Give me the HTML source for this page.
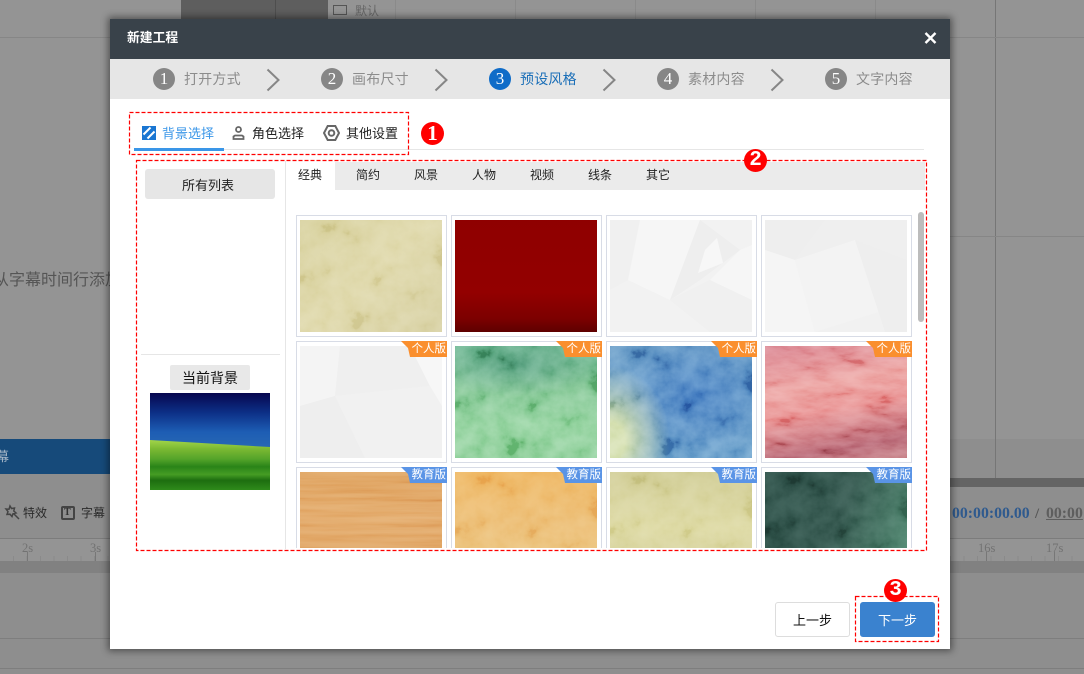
<!DOCTYPE html>
<html lang="zh"><head><meta charset="utf-8"><title>新建工程</title>
<style>
*{box-sizing:border-box}
html,body{margin:0;padding:0}
body{width:1084px;height:674px;overflow:hidden;position:relative;background:#8e8e8e;font-family:"Liberation Sans","Noto Sans CJK SC",sans-serif;color:#222}
.a{position:absolute}
.t{position:absolute;white-space:nowrap;line-height:1}
.vl{position:absolute;top:0;width:1px;height:439px;background:#8a8a8a}
.m{position:absolute;left:110px;top:19px;width:840px;height:630px;background:#fff;box-shadow:0 0 7px 2px rgba(0,0,0,.45)}
.num{position:absolute;top:68px;width:22px;height:22px;border-radius:50%;background:#868686;color:#fff;font:17px/22px "Liberation Serif",serif;text-align:center}
.st{position:absolute;top:72px;font-size:14px;line-height:14px;letter-spacing:.2px;color:#8c8c8c;white-space:nowrap}
.chev{position:absolute;top:68px;width:14px;height:24px}
.red{position:absolute;width:23px;height:23px;border-radius:50%;background:#f00;color:#fff;text-align:center;font:bold 21px/23px "Liberation Mono",monospace}
.tb{position:absolute;top:169px;font-size:12px;line-height:12px;color:#222;white-space:nowrap}
.card{position:absolute;width:151px;height:122px;border:1px solid #d8dce6;background:#fff}
.img{position:absolute;left:3px;top:4px;width:142px;height:112px;overflow:hidden}
.img svg{position:absolute;left:0;top:0;width:142px;height:112px;mix-blend-mode:soft-light;opacity:.6}
.img svg.f{mix-blend-mode:normal;opacity:1}
.img svg.s{opacity:.35}
.bd{position:absolute;right:-1px;top:-1px;width:46px;height:16px;color:#fff;font-size:11.500px;line-height:16px;text-align:right;padding-right:1px;clip-path:polygon(0 0,100% 0,100% 100%,9px 100%,7px 7px)}
.o{background:#fa8f2e}.b{background:#5a94e6}
.ruler{position:absolute;top:556px;height:5px;background:repeating-linear-gradient(90deg,#8a8a8a 0 1px,transparent 1px 13.500px)}
.rt{font:12.500px/12px "Liberation Serif",serif;color:#727272;top:542px}
</style></head><body>

<svg width="0" height="0" style="position:absolute">
<filter id="n2" x="0" y="0" width="100%" height="100%"><feTurbulence type="fractalNoise" baseFrequency=".045" numOctaves="5" seed="11"/><feColorMatrix values="1.800 0 0 0 -.4 1.800 0 0 0 -.4 1.800 0 0 0 -.4 0 0 0 0 1"/></filter>
<filter id="n3" x="0" y="0" width="100%" height="100%"><feTurbulence type="fractalNoise" baseFrequency=".03 .09" numOctaves="5" seed="21"/><feColorMatrix values="1.800 0 0 0 -.4 1.800 0 0 0 -.4 1.800 0 0 0 -.4 0 0 0 0 1"/></filter>
<filter id="n4" x="0" y="0" width="100%" height="100%"><feTurbulence type="fractalNoise" baseFrequency=".008 .16" numOctaves="4" seed="5"/><feColorMatrix values="1.800 0 0 0 -.4 1.800 0 0 0 -.4 1.800 0 0 0 -.4 0 0 0 0 1"/></filter>
</svg>

<!-- background application -->
<div class="a" style="left:0;top:0;width:1084px;height:439px;background:#949494"></div>
<div class="a" style="left:181px;top:0;width:147px;height:19px;background:#5e5e5e"></div>
<div class="a" style="left:275px;top:0;width:1px;height:19px;background:#4e4e4e"></div>
<div class="vl" style="left:395px"></div><div class="vl" style="left:515px"></div><div class="vl" style="left:635px"></div><div class="vl" style="left:755px"></div><div class="vl" style="left:875px"></div>
<div class="a" style="left:995px;top:0;width:1px;height:487px;background:#767676"></div>
<div class="a" style="left:0;top:37px;width:110px;height:1px;background:#868686"></div>
<div class="a" style="left:950px;top:37px;width:134px;height:1px;background:#868686"></div>
<div class="a" style="left:950px;top:236px;width:134px;height:1px;background:#868686"></div>
<div class="a" style="left:333px;top:5px;width:14px;height:10px;border:1px solid #555"></div>
<div class="t" style="left:355px;top:5px;font-size:12px;color:#666">默认</div>
<div class="t" style="left:-7px;top:273px;font-size:16px;color:#555">从字幕时间行添加</div>
<div class="a" style="left:0;top:439px;width:110px;height:35px;background:#164a7a"></div>
<div class="t" style="left:-4px;top:450px;font-size:13px;color:#a8b8c8">幕</div>
<div class="a" style="left:950px;top:478px;width:134px;height:9px;background:#646464"></div>

<svg class="a" style="left:4px;top:504px" width="17" height="17" viewBox="0 0 17 17"><path d="M6 2l1.500 2.500 3-.5-.7 3 2.200 2-3 .7-1 2.800-2-2.300-3 .2 1-2.800L2 5l3 .2z M10 10l5 5" fill="none" stroke="#444" stroke-width="1.500"/></svg>
<div class="t" style="left:23px;top:507px;font-size:12px;color:#2b2b2b">特效</div>
<div class="a" style="left:61px;top:506px;width:14px;height:14px;border:2px solid #444;border-radius:2px"></div>
<div class="t" style="left:64px;top:508px;font:bold 10px/10px 'Liberation Serif',serif;color:#333">T</div>
<div class="t" style="left:81px;top:507px;font-size:12px;color:#2b2b2b">字幕</div>
<div class="t" style="left:952px;top:506px;font:bold 15.800px/16px 'Liberation Serif',serif;color:#2f5a8e">00:00:00.00</div>
<div class="t" style="left:1035px;top:506px;font:bold 15px/16px 'Liberation Serif',serif;color:#555">/</div>
<div class="t" style="left:1046px;top:506px;font:bold 15.800px/16px 'Liberation Serif',serif;color:#5e5e5e;text-decoration:underline">00:00</div>

<div class="a" style="left:0;top:539px;width:1084px;height:22px;background:#949494"></div>
<div class="a" style="left:0;top:538px;width:1084px;height:1px;background:#7c7c7c"></div>
<div class="t rt" style="left:22px">2s</div>
<div class="t rt" style="left:90px">3s</div>
<div class="t rt" style="left:978px">16s</div>
<div class="t rt" style="left:1046px">17s</div>
<div class="ruler" style="left:13px;width:97px"></div>
<div class="ruler" style="left:950px;width:134px"></div>
<div class="a" style="left:27px;top:552px;width:1px;height:9px;background:#777"></div>
<div class="a" style="left:95px;top:552px;width:1px;height:9px;background:#777"></div>
<div class="a" style="left:986px;top:552px;width:1px;height:9px;background:#777"></div>
<div class="a" style="left:1054px;top:552px;width:1px;height:9px;background:#777"></div>
<div class="a" style="left:0;top:561px;width:1084px;height:12px;background:#818181"></div>
<div class="a" style="left:0;top:638px;width:1084px;height:1px;background:#7e7e7e"></div>
<div class="a" style="left:0;top:668px;width:1084px;height:1px;background:#7e7e7e"></div>

<!-- modal -->
<div class="m"></div>
<div class="a" style="left:110px;top:19px;width:840px;height:40px;background:#39424a"></div>
<div class="t" style="left:127px;top:32px;font-size:12.800px;font-weight:bold;color:#fff">新建工程</div>
<svg class="a" style="left:924px;top:32px" width="13" height="12" viewBox="0 0 13 12"><path d="M1.500 1l10 10M11.500 1l-10 10" stroke="#fff" stroke-width="2.400" fill="none"/></svg>
<div class="a" style="left:110px;top:59px;width:840px;height:40px;background:#e6e6e6"></div>

<div class="num" style="left:153px">1</div><div class="st" style="left:184px">打开方式</div>
<svg class="chev" style="left:266px" viewBox="0 0 14 24"><path d="M1.500 1.500l11 10.500-11 10.500" fill="none" stroke="#868686" stroke-width="2"/></svg>
<div class="num" style="left:321px">2</div><div class="st" style="left:352px">画布尺寸</div>
<svg class="chev" style="left:434px" viewBox="0 0 14 24"><path d="M1.500 1.500l11 10.500-11 10.500" fill="none" stroke="#868686" stroke-width="2"/></svg>
<div class="num" style="left:489px;background:#0f6cc8">3</div><div class="st" style="left:520px;color:#1b6fb8">预设风格</div>
<svg class="chev" style="left:602px" viewBox="0 0 14 24"><path d="M1.500 1.500l11 10.500-11 10.500" fill="none" stroke="#868686" stroke-width="2"/></svg>
<div class="num" style="left:657px">4</div><div class="st" style="left:688px">素材内容</div>
<svg class="chev" style="left:770px" viewBox="0 0 14 24"><path d="M1.500 1.500l11 10.500-11 10.500" fill="none" stroke="#868686" stroke-width="2"/></svg>
<div class="num" style="left:825px">5</div><div class="st" style="left:856px">文字内容</div>

<!-- tabs -->
<div class="a" style="left:134px;top:149px;width:790px;height:1px;background:#e6e6e6"></div>
<div class="a" style="left:134px;top:148px;width:90px;height:3px;background:#3a96e8"></div>
<svg class="a" style="left:142px;top:126px" width="14" height="14" viewBox="0 0 14 14"><rect width="14" height="14" fill="#1a76d2"/><path d="M1.500 8.500L8.500 1.500M5.500 12.500L12.500 5.500" stroke="#fff" stroke-width="2"/></svg>
<div class="t" style="left:162px;top:127px;font-size:13px;color:#3a96e8">背景选择</div>
<svg class="a" style="left:232px;top:126px" width="13" height="14" viewBox="0 0 13 14"><circle cx="6.500" cy="3.500" r="2.500" fill="none" stroke="#666" stroke-width="1.800"/><path d="M1.500 13V10.500l1.500-1h7l1.500 1V13z" fill="none" stroke="#666" stroke-width="1.800"/></svg>
<div class="t" style="left:252px;top:127px;font-size:13px">角色选择</div>
<svg class="a" style="left:323px;top:125px" width="17" height="16" viewBox="0 0 17 16"><path d="M4.700 1h7.600l3.700 7-3.700 7H4.700L1 8z" fill="none" stroke="#666" stroke-width="2"/><circle cx="8.500" cy="8" r="2.800" fill="none" stroke="#666" stroke-width="2"/></svg>
<div class="t" style="left:346px;top:127px;font-size:13px">其他设置</div>

<!-- left panel -->
<div class="a" style="left:145px;top:169px;width:130px;height:30px;background:#e6e6e6;border-radius:3px"></div>
<div class="t" style="left:182px;top:179px;font-size:13px">所有列表</div>
<div class="a" style="left:285px;top:161px;width:1px;height:388px;background:#e6e6e6"></div>
<div class="a" style="left:141px;top:354px;width:139px;height:1px;background:#e6e6e6"></div>
<div class="a" style="left:170px;top:365px;width:80px;height:25px;background:#e8e8e8;border-radius:2px"></div>
<div class="t" style="left:182px;top:371px;font-size:14px;color:#111">当前背景</div>
<div class="a" style="left:150px;top:393px;width:120px;height:97px;overflow:hidden;background:linear-gradient(#07074f 0,#0c2f86 20%,#1d5db4 40%,#2a6ab4 60%)">
  <div class="a" style="left:0;top:0;width:120px;height:97px;clip-path:polygon(0 47px,120px 54px,120px 97px,0 97px);background:linear-gradient(#a4d64a 48%,#7ab832 58%,#55a42a 68%,#2a8418 76%,#459c24 84%,#1d6e10 90%,#2f8a1a 100%)"></div>
</div>

<!-- category tabs -->
<div class="a" style="left:335px;top:162px;width:590px;height:28px;background:#ebebeb"></div>
<div class="tb" style="left:298px">经典</div><div class="tb" style="left:356px">简约</div><div class="tb" style="left:414px">风景</div><div class="tb" style="left:472px">人物</div><div class="tb" style="left:530px">视频</div><div class="tb" style="left:588px">线条</div><div class="tb" style="left:646px">其它</div>

<!-- grid -->
<div class="a" style="left:296px;top:215px;width:616px;height:333px;overflow:hidden">
 <div class="card" style="left:0;top:0"><div class="img" style="background:linear-gradient(135deg,#d6cf9a,#ded7a8 50%,#d6cfa0)"><svg class="s"><rect width="142" height="112" filter="url(#n2)"/></svg></div></div>
 <div class="card" style="left:155px;top:0"><div class="img" style="background:linear-gradient(#8f0000 0,#930000 65%,#7c0000 88%,#5e0000 100%)"></div></div>
 <div class="card" style="left:310px;top:0"><div class="img" style="background:#f2f2f2"><svg class="f" viewBox="0 0 142 112"><path d="M0 0h30L18 60 0 70z" fill="#f0f0f0"/><path d="M30 0h60L60 80 18 60z" fill="#f6f6f6"/><path d="M90 0l40 30-40 30-30 20z" fill="#eeeeee"/><path d="M95 30l12-12 6 25-25 10z" fill="#f7f7f7"/><path d="M0 70l60 10 40 32H0z" fill="#f2f2f2"/><path d="M60 80l40-20 42 20v32h-42z" fill="#f0f0f0"/><path d="M130 30l12-5v55l-42-20z" fill="#f6f6f6"/></svg></div></div>
 <div class="card" style="left:465px;top:0"><div class="img" style="background:#f1f1f1"><svg class="f" viewBox="0 0 142 112"><path d="M0 0h60L30 40 0 30z" fill="#eeeeee"/><path d="M0 30l30 10 20 72H0z" fill="#f5f5f5"/><path d="M60 0h82v40L90 20 30 40z" fill="#efefef"/><path d="M30 40l60-20 30 70-70 22z" fill="#f3f3f3"/><path d="M90 20l52 20v72H120z" fill="#eeeeee"/></svg></div></div>

 <div class="card" style="left:0;top:126px"><div class="img" style="background:#f1f1f1"><svg class="f" viewBox="0 0 142 112"><path d="M0 0h40L35 50 0 60z" fill="#f4f4f4"/><path d="M40 0h70l20 40-95 10z" fill="#efefef"/><path d="M110 0h32v60l-12-20z" fill="#f7f7f7"/><path d="M0 60l35-10 30 62H0z" fill="#eeeeee"/><path d="M35 50l95-10 12 72H65z" fill="#f1f1f1"/></svg></div><div class="bd o">个人版</div></div>
 <div class="card" style="left:155px;top:126px"><div class="img" style="background:radial-gradient(ellipse 90px 32px at 60px 18px,#4f9a78,transparent),linear-gradient(#62b088 0,#7cc28e 35%,#8ccf98 70%,#86cb92 100%)"><svg><rect width="142" height="112" filter="url(#n2)"/></svg></div><div class="bd o">个人版</div></div>
 <div class="card" style="left:310px;top:126px"><div class="img" style="background:radial-gradient(ellipse 60px 75px at 0 95px,#d0dca8 25%,rgba(208,220,168,0) 100%),radial-gradient(ellipse 80px 60px at 85px 50px,#3f78be,transparent),linear-gradient(#5a90c0,#5f97c6)"><svg><rect width="142" height="112" filter="url(#n2)"/></svg></div><div class="bd o">个人版</div></div>
 <div class="card" style="left:465px;top:126px"><div class="img" style="background:linear-gradient(170deg,#d8808c 0,#ea9a98 35%,#e88e8e 55%,#b4606e 85%,#c47a80 100%)"><svg><rect width="142" height="112" filter="url(#n3)"/></svg></div><div class="bd o">个人版</div></div>

 <div class="card" style="left:0;top:252px"><div class="img" style="background:linear-gradient(#dea05c,#e2a766 40%,#dc9c58)"><svg class="s"><rect width="142" height="112" filter="url(#n4)"/></svg></div><div class="bd b">教育版</div></div>
 <div class="card" style="left:155px;top:252px"><div class="img" style="background:linear-gradient(#eeb45e,#ecbc72 45%,#eac680 100%)"><svg class="s"><rect width="142" height="112" filter="url(#n2)"/></svg></div><div class="bd b">教育版</div></div>
 <div class="card" style="left:310px;top:252px"><div class="img" style="background:linear-gradient(#cfcb92,#dcd8a0 50%,#d0cc96)"><svg class="s"><rect width="142" height="112" filter="url(#n2)"/></svg></div><div class="bd b">教育版</div></div>
 <div class="card" style="left:465px;top:252px"><div class="img" style="background:linear-gradient(110deg,#284a42 0,#2f5249 50%,#4f8a70 100%)"><svg class="s"><rect width="142" height="112" filter="url(#n2)"/></svg></div><div class="bd b">教育版</div></div>
</div>
<div class="a" style="left:918px;top:212px;width:6px;height:110px;background:#bcbcbc;border-radius:3px"></div>

<!-- buttons -->
<div class="a" style="left:775px;top:602px;width:75px;height:35px;background:#fff;border:1px solid #ddd;border-radius:3px"></div>
<div class="t" style="left:793px;top:614px;font-size:13px;color:#111">上一步</div>
<div class="a" style="left:860px;top:602px;width:75px;height:35px;background:#3a82cf;border-radius:3px"></div>
<div class="t" style="left:878px;top:614px;font-size:13px;color:#fff">下一步</div>

<!-- annotations -->
<svg class="a" style="left:0;top:0" width="1084" height="674" fill="none" stroke="#f00" stroke-width="1.200" stroke-dasharray="4 2">
<rect x="129.500" y="112.500" width="279" height="42"/>
<rect x="136.500" y="160.500" width="790" height="390"/>
<rect x="855.500" y="596.500" width="83" height="45"/>
</svg>
<div class="red" style="left:421px;top:122px;font-family:'Liberation Serif',serif">1</div>
<div class="red" style="left:744px;top:149px">2</div>
<div class="red" style="left:884px;top:579px">3</div>
</body></html>
